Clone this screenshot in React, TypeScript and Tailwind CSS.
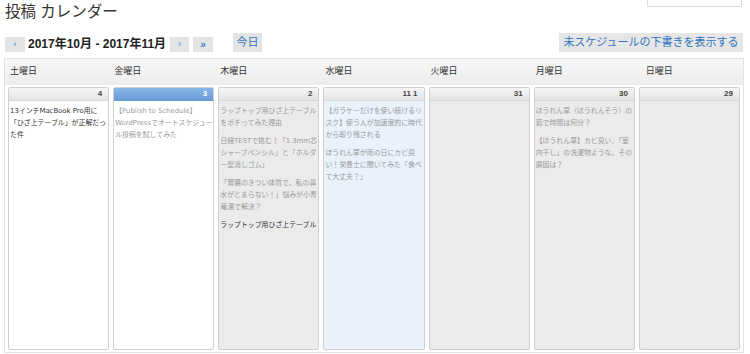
import React from 'react';

interface Post {
  title: string;
  dark?: boolean;
}

interface Day {
  label: string;
  labelClass: string;
  num: string;
  cellClass: string;
  blue?: boolean;
  posts: Post[];
}

const days: Day[] = [
  {
    label: '土曜日',
    labelClass: 'pl-[2px]',
    num: '4',
    cellClass: 'bg-white',
    posts: [{ title: '13インチMacBook Pro用に「ひざ上テーブル」が正解だった件', dark: true }],
  },
  {
    label: '金曜日',
    labelClass: 'pl-[1px]',
    num: '3',
    cellClass: 'bg-white',
    blue: true,
    posts: [{ title: '【Publish to Schedule】WordPressでオートスケジュール投稿を試してみた' }],
  },
  {
    label: '木曜日',
    labelClass: 'pl-[2px]',
    num: '2',
    cellClass: 'bg-[#ebebeb]',
    posts: [
      { title: 'ラップトップ用ひざ上テーブルをポチってみた理由' },
      { title: '日経TESTで挑む！「1.3mm芯シャープペンシル」と「ホルダー型消しゴム」' },
      { title: '「胃腸のきつい体質で、私の鼻水がとまらない！」悩みが小青竜湯で解決？' },
      { title: 'ラップトップ用ひざ上テーブル', dark: true },
    ],
  },
  {
    label: '水曜日',
    labelClass: 'pl-[2px]',
    num: '11 1',
    cellClass: 'bg-[#e9f1fb]',
    posts: [
      { title: '【ガラケーだけを使い続けるリスク】使う人が加速度的に時代から取り残される' },
      { title: 'ほうれん草が雨の日にカビ臭い！栄養士に聞いてみた「食べて大丈夫？」' },
    ],
  },
  { label: '火曜日', labelClass: 'pl-[2px]', num: '31', cellClass: 'bg-[#ebebeb]', posts: [] },
  {
    label: '月曜日',
    labelClass: 'pl-[2px]',
    num: '30',
    cellClass: 'bg-[#ebebeb]',
    posts: [
      { title: 'ほうれん草（ほうれんそう）の茹で時間は何分？' },
      { title: '【ほうれん草】カビ臭い、「室内干し」の洗濯物ような。その原因は？' },
    ],
  },
  { label: '日曜日', labelClass: 'pl-[7px]', num: '29', cellClass: 'bg-[#ebebeb]', posts: [] },
];

const NavButton = ({ children, w }: { children: React.ReactNode; w: string }) => (
  <button
    className={`${w} h-[15px] flex items-center justify-center bg-[#e4e4e4] text-[#3b7cc4] text-[9px] leading-none`}
  >
    {children}
  </button>
);

const App = () => {
  return (
    <div
      className="w-[750px] h-[354px] overflow-hidden bg-white text-[#333] flex flex-col"
      style={{ fontFamily: '"Liberation Sans", "Noto Sans CJK JP", sans-serif' }}
    >
      {/* Title row */}
      <div className="flex justify-between items-start h-[33px]">
        <h1 className="pl-[5px] pt-[2px] text-[15.5px] leading-[20px] text-[#333]">投稿 カレンダー</h1>
        <div className="w-[95px] h-[7px] mr-[8px] border-x border-b border-[#dcdcdc] bg-white" />
      </div>

      {/* Navigation */}
      <div className="flex justify-between items-start h-[25px]">
        <div className="flex items-end pl-[5px]">
          <NavButton w="w-[20px]">‹</NavButton>
          <span className="ml-[3px] text-[12px] font-bold leading-[15px] text-[#222]">2017年10月 - 2017年11月</span>
          <div className="ml-[4px]">
            <NavButton w="w-[19px]">›</NavButton>
          </div>
          <div className="ml-[4px]">
            <NavButton w="w-[20px]">
              <span className="text-[10px] font-bold">»</span>
            </NavButton>
          </div>
          <button className="ml-[20px] w-[29px] h-[19px] bg-[#e4e4e4] text-[#2f74c0] text-[11px] leading-none flex items-center justify-center">
            今日
          </button>
        </div>
        <button className="mr-[7px] w-[184px] h-[19px] bg-[#e6e6e6] text-[#2f74c0] text-[11px] leading-none flex items-center justify-center">
          未スケジュールの下書きを表示する
        </button>
      </div>

      {/* Calendar */}
      <div className="ml-[4px] w-[740px] border border-[#e2e2e2]">
        <div className="h-[26px] bg-gradient-to-b from-[#f8f8f8] to-[#ececec] grid grid-cols-7 gap-[4px] px-[3px] items-center">
          {days.map((d) => (
            <div key={d.label} className={`${d.labelClass} text-[9px] text-[#333]`}>
              {d.label}
            </div>
          ))}
        </div>
        <div className="grid grid-cols-7 gap-[4px] px-[3px] pt-[2px] pb-[2px]">
          {days.map((d) => (
            <div
              key={d.label}
              className={`${d.cellClass} h-[263px] border border-[#cfcfcf] rounded-[2px] flex flex-col overflow-hidden`}
            >
              <div
                className={
                  d.blue
                    ? 'h-[13px] bg-gradient-to-b from-[#86b4e6] to-[#6b9dd8] border-b border-[#6b9dd8] text-white text-[8px] font-bold leading-[12px] text-right pr-[6px]'
                    : 'h-[13px] bg-gradient-to-b from-[#f6f6f6] to-[#e3e3e3] border-b border-[#d8d8d8] text-[#444] text-[8px] font-bold leading-[12px] text-right pr-[6px]'
                }
              >
                {d.num}
              </div>
              <div
                className="pl-[1px] pt-[4px] flex flex-col gap-[6px]"
                style={{ fontFamily: '"DejaVu Sans", "Noto Sans CJK JP", sans-serif' }}
              >
                {d.posts.map((p) => (
                  <p
                    key={p.title}
                    className={`text-[6.9px] leading-[12px] ${p.dark ? 'text-[#333]' : 'text-[#9a9a9a]'}`}
                  >
                    {p.title}
                  </p>
                ))}
              </div>
            </div>
          ))}
        </div>
      </div>
    </div>
  );
};

export default App;
